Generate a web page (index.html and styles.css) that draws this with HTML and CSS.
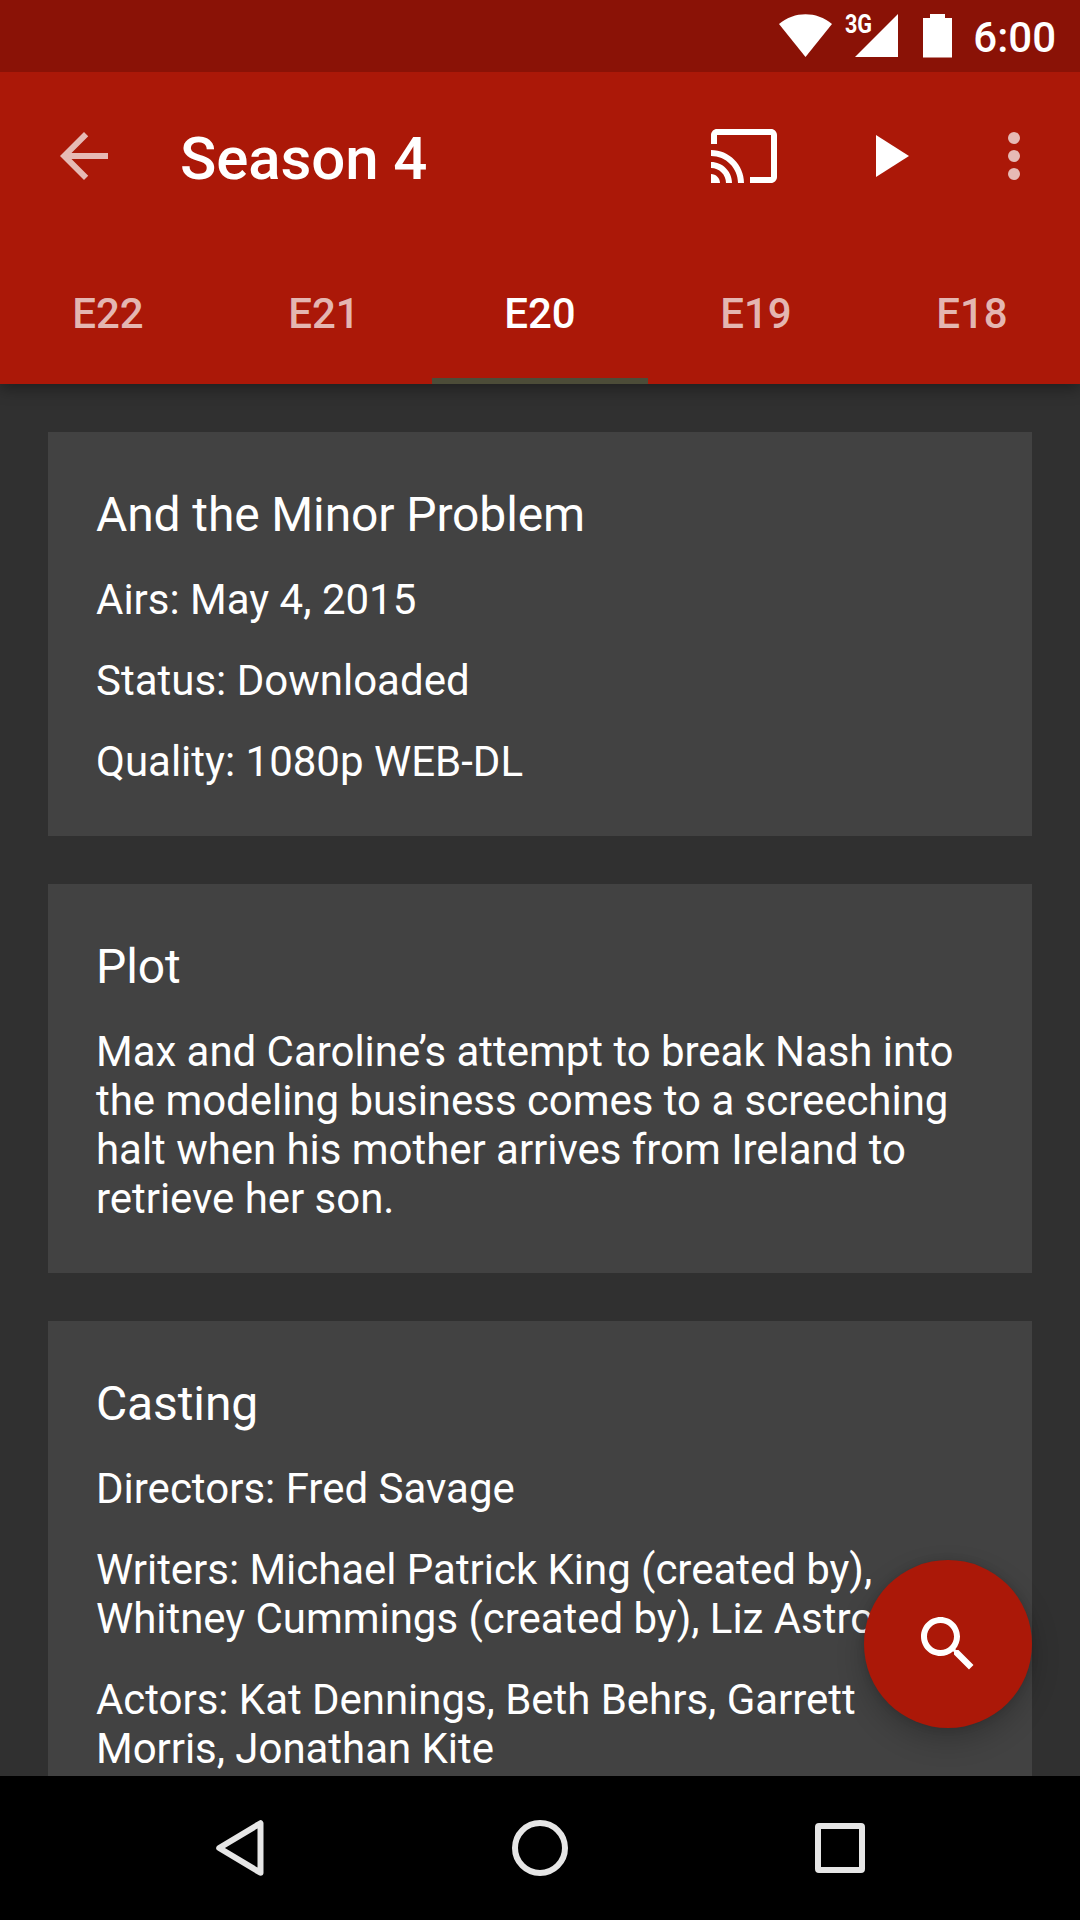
FILE: index.html
```html
<!DOCTYPE html>
<html lang="en">
<head>
<meta charset="utf-8">
<title>Season 4</title>
<link rel="stylesheet" href="styles.css">
</head>
<body>
<div class="screen">
  <div class="status-bar">
    <svg class="status-icons" width="176" height="72" viewBox="778 0 176 72">
      <path d="M779 24C794.500 11 816.500 11 832 24L805.500 57z"/>
      <text class="network" transform="translate(845 33.200) scale(.83 1)">3G</text>
      <path d="M898 14v43h-43z"/>
      <path d="M930 14h15v4h7v39.500h-29V18h7z"/>
    </svg>
    <span class="clock">6:00</span>
  </div>
  <header class="header">
    <div class="toolbar">
      <svg class="icon dim" viewBox="0 0 24 24"><path d="M20 11H7.830l5.590-5.590L12 4l-8 8 8 8 1.410-1.410L7.830 13H20v-2z"/></svg>
      <h1 class="title">Season 4</h1>
      <svg class="icon" viewBox="0 0 24 24"><path d="M21 3H3c-1.100 0-2 .9-2 2v3h2V5h18v14h-7v2h7c1.100 0 2-.9 2-2V5c0-1.100-.9-2-2-2zM1 18v3h3c0-1.660-1.340-3-3-3zm0-4v2c2.760 0 5 2.240 5 5h2c0-3.870-3.130-7-7-7zm0-4v2c4.970 0 9 4.030 9 9h2c0-6.080-4.930-11-11-11z"/></svg>
      <svg class="icon play" viewBox="0 0 24 24"><path d="M8 5v14l11-7z"/></svg>
      <svg class="icon dim more" viewBox="0 0 24 24"><circle cx="12" cy="6" r="2"/><circle cx="12" cy="12" r="2"/><circle cx="12" cy="18" r="2"/></svg>
    </div>
    <nav class="tabs">
      <span class="tab">E22</span>
      <span class="tab">E21</span>
      <span class="tab active">E20</span>
      <span class="tab">E19</span>
      <span class="tab">E18</span>
    </nav>
  </header>
  <main class="content">
    <section class="card">
      <h2>And the Minor Problem</h2>
      <p>Airs: May 4, 2015</p>
      <p>Status: Downloaded</p>
      <p>Quality: 1080p WEB-DL</p>
    </section>
    <section class="card">
      <h2>Plot</h2>
      <p class="long">Max and Caroline’s attempt to break Nash into<br>the modeling business comes to a screeching<br>halt when his mother arrives from Ireland to<br>retrieve her son.</p>
    </section>
    <section class="card">
      <h2>Casting</h2>
      <p>Directors: Fred Savage</p>
      <p class="long">Writers: Michael Patrick King (created by),<br>Whitney Cummings (created by), Liz Astrof</p>
      <p class="long">Actors: Kat Dennings, Beth Behrs, Garrett<br>Morris, Jonathan Kite</p>
    </section>
  </main>
  <div class="fab">
    <svg class="icon" viewBox="0 0 24 24"><path d="M15.500 14h-.79l-.28-.27C15.410 12.590 16 11.110 16 9.500 16 5.910 13.090 3 9.500 3S3 5.910 3 9.500 5.910 16 9.500 16c1.610 0 3.090-.59 4.230-1.570l.27.28v.79l5 4.990L20.490 19l-4.990-5zm-6 0C7.010 14 5 11.990 5 9.500S7.010 5 9.500 5 14 7.010 14 9.500 11.990 14 9.500 14z"/></svg>
  </div>
  <footer class="nav-bar">
    <svg viewBox="0 0 72 72"><path d="M56.500 11.200v49.600L15.200 36z"/></svg>
    <svg viewBox="0 0 72 72"><circle cx="36" cy="36" r="25"/></svg>
    <svg viewBox="0 0 72 72"><rect x="14" y="14" width="44" height="44" rx="1"/></svg>
  </footer>
</div>
</body>
</html>
```
FILE: styles.css
```css
* { box-sizing: border-box; margin: 0; padding: 0; }

body {
  font-family: Roboto, sans-serif;
  color: #fff;
  background: #303030;
}

.screen {
  position: relative;
  display: flex;
  flex-direction: column;
  width: 1080px;
  height: 1920px;
  overflow: hidden;
}

.status-bar {
  z-index: 2;
  display: flex;
  flex: none;
  justify-content: flex-end;
  gap: 19px;
  height: 72px;
  padding-right: 24px;
  background: #8a1206;
}

.status-icons { fill: #fff; }
.network { font-size: 26px; font-weight: 700; }
.clock { font-size: 42px; font-weight: 500; line-height: 76px; }

.header {
  z-index: 1;
  flex: none;
  height: 312px;
  background: #ab1808;
  box-shadow: 0 5px 14px rgba(0, 0, 0, .35);
}

.toolbar {
  display: flex;
  align-items: center;
  height: 168px;
  padding: 0 30px 0 48px;
}

.icon { flex: none; width: 72px; height: 72px; fill: #fff; }
.dim { opacity: .7; }
.play { margin-left: 72px; }
.more { margin-left: 54px; }

.title {
  flex: 1;
  padding: 5px 0 0 60px;
  font-size: 60px;
  font-weight: 500;
  letter-spacing: -.1px;
  line-height: 70px;
}

.tabs { display: flex; height: 144px; }

.tab {
  flex: 1;
  padding-top: 2px;
  border-bottom: 6px solid transparent;
  color: rgba(255, 255, 255, .7);
  font-size: 42px;
  font-weight: 500;
  line-height: 144px;
  text-align: center;
}

.tab.active { color: #fff; border-color: #4c4c38; }

.content {
  display: flex;
  flex: 1;
  flex-direction: column;
  gap: 48px;
  min-height: 0;
  padding: 48px 48px 0;
  overflow: hidden;
}

.card {
  display: flex;
  flex: none;
  flex-direction: column;
  gap: 32px;
  padding: 54px 48px 50px;
  background: #424242;
}

.card h2 { font-size: 48px; font-weight: 400; letter-spacing: -.12px; line-height: 57px; }
.card p { font-size: 42px; line-height: 49px; white-space: nowrap; }
.card .long { letter-spacing: -.04px; }

.fab {
  position: absolute;
  right: 48px;
  bottom: 192px;
  display: flex;
  align-items: center;
  justify-content: center;
  width: 168px;
  height: 168px;
  border-radius: 50%;
  background: #ab1808;
  box-shadow: 0 12px 28px rgba(0, 0, 0, .22), 0 0 8px rgba(0, 0, 0, .12);
}

.nav-bar {
  z-index: 1;
  display: flex;
  flex: none;
  align-items: center;
  justify-content: center;
  gap: 228px;
  height: 144px;
  background: #000;
}

.nav-bar svg {
  width: 72px;
  height: 72px;
  fill: none;
  stroke: #e6e6e6;
  stroke-width: 6;
  stroke-linejoin: round;
}
```
